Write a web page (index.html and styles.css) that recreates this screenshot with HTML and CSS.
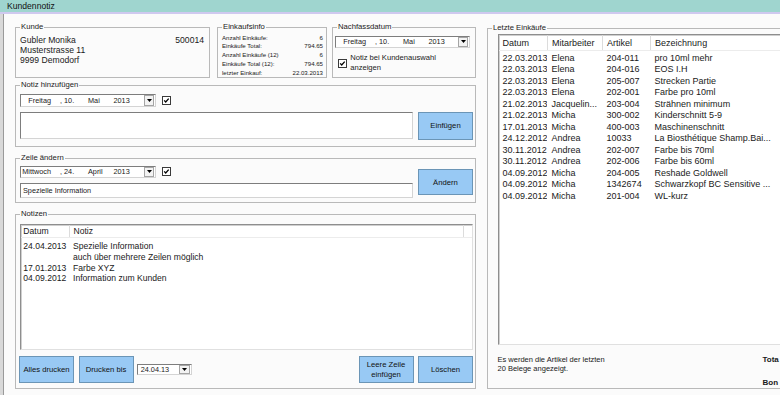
FILE: index.html
```html
<!DOCTYPE html>
<html lang="de">
<head>
  <meta charset="UTF-8">
  <meta name="viewport" content="width=device-width, initial-scale=1.0">
  <title>Kundennotiz</title>
  <link rel="stylesheet" href="styles.css">
</head>
<body>
  <div class="window">
    <div class="titlebar">Kundennotiz</div>
    <div class="client">
      <div class="left">
        <div class="toprow">
          <!-- Kunde -->
          <fieldset class="group kunde">
            <legend>Kunde</legend>
            <div class="spread"><span>Gubler Monika</span><span>500014</span></div>
            <div>Musterstrasse 11</div>
            <div>9999 Demodorf</div>
          </fieldset>

          <!-- Einkaufsinfo -->
          <fieldset class="group info">
            <legend>Einkaufsinfo</legend>
            <div class="spread"><span>Anzahl Einkäufe:</span><span>6</span></div>
            <div class="spread"><span>Einkäufe Total:</span><span>794.65</span></div>
            <div class="spread"><span>Anzahl Einkäufe (12)</span><span>6</span></div>
            <div class="spread"><span>Einkäufe Total (12):</span><span>794.65</span></div>
            <div class="spread"><span>letzter Einkauf:</span><span>22.03.2013</span></div>
          </fieldset>

          <!-- Nachfassdatum -->
          <fieldset class="group nachfass">
            <legend>Nachfassdatum</legend>
            <div class="datepick wide">
              <span class="dp-day">Freitag</span><span class="dp-num">, 10.</span><span class="dp-month">Mai</span><span class="dp-year">2013</span>
              <span class="dp-btn"><svg width="5" height="3" viewBox="0 0 5 3"><path d="M0 0h5L2.5 3z" fill="#000"/></svg></span>
            </div>
            <div class="check-label">
              <span class="check"><svg width="7" height="7" viewBox="0 0 7 7"><path d="M1.2 3.4l1.5 1.6 3-3.4" fill="none" stroke="#000" stroke-width="1.3"/></svg></span>
              <span>Notiz bei Kundenauswahl<br>anzeigen</span>
            </div>
          </fieldset>
        </div>

        <!-- Notiz hinzufügen -->
        <fieldset class="group neu">
          <legend>Notiz hinzufügen</legend>
          <div class="row">
            <div class="datepick">
              <span class="dp-day">Freitag</span><span class="dp-num">, 10.</span><span class="dp-month">Mai</span><span class="dp-year">2013</span>
              <span class="dp-btn"><svg width="5" height="3" viewBox="0 0 5 3"><path d="M0 0h5L2.5 3z" fill="#000"/></svg></span>
            </div>
            <span class="check"><svg width="7" height="7" viewBox="0 0 7 7"><path d="M1.2 3.4l1.5 1.6 3-3.4" fill="none" stroke="#000" stroke-width="1.3"/></svg></span>
          </div>
          <div class="row neu-text">
            <div class="textbox memo"></div>
            <div class="btn big">Einfügen</div>
          </div>
        </fieldset>

        <!-- Zeile ändern -->
        <fieldset class="group zeile">
          <legend>Zeile ändern</legend>
          <div class="row top">
            <div class="zeile-fields">
              <div class="row">
                <div class="datepick">
                  <span class="dp-day">Mittwoch</span><span class="dp-num">, 24.</span><span class="dp-month">April</span><span class="dp-year">2013</span>
                  <span class="dp-btn"><svg width="5" height="3" viewBox="0 0 5 3"><path d="M0 0h5L2.5 3z" fill="#000"/></svg></span>
                </div>
                <span class="check"><svg width="7" height="7" viewBox="0 0 7 7"><path d="M1.2 3.4l1.5 1.6 3-3.4" fill="none" stroke="#000" stroke-width="1.3"/></svg></span>
              </div>
              <div class="textbox line">Spezielle Information</div>
            </div>
            <div class="btn aendern">Ändern</div>
          </div>
        </fieldset>

        <!-- Notizen -->
        <fieldset class="group notizen">
          <legend>Notizen</legend>
          <div class="list notes">
            <table>
              <colgroup><col class="n-datum"><col class="n-notiz"><col class="n-rest"></colgroup>
              <thead><tr><th>Datum</th><th>Notiz</th><th></th></tr></thead>
              <tbody>
                <tr class="first"><td>24.04.2013</td><td>Spezielle Information</td><td></td></tr>
                <tr><td></td><td>auch über mehrere Zeilen möglich</td><td></td></tr>
                <tr><td>17.01.2013</td><td>Farbe XYZ</td><td></td></tr>
                <tr><td>04.09.2012</td><td>Information zum Kunden</td><td></td></tr>
              </tbody>
            </table>
          </div>
          <div class="row buttons">
            <div class="btn big first-btn">Alles drucken</div>
            <div class="btn big">Drucken bis</div>
            <div class="combo">
              <span>24.04.13</span>
              <span class="dp-btn"><svg width="5" height="3" viewBox="0 0 5 3"><path d="M0 0h5L2.5 3z" fill="#000"/></svg></span>
            </div>
            <div class="btn big push">Leere Zeile<br>einfügen</div>
            <div class="btn big">Löschen</div>
          </div>
        </fieldset>
      </div>

      <div class="right">
        <fieldset class="group einkaeufe">
          <legend>Letzte Einkäufe</legend>
          <div class="list sales">
            <table>
              <colgroup><col class="s-datum"><col class="s-mitarb"><col class="s-artikel"><col class="s-bez"></colgroup>
              <thead><tr><th>Datum</th><th>Mitarbeiter</th><th>Artikel</th><th>Bezeichnung</th></tr></thead>
              <tbody>
                <tr class="first"><td>22.03.2013</td><td>Elena</td><td>204-011</td><td>pro 10ml mehr</td></tr>
                <tr><td>22.03.2013</td><td>Elena</td><td>204-016</td><td>EOS I.H</td></tr>
                <tr><td>22.03.2013</td><td>Elena</td><td>205-007</td><td>Strecken Partie</td></tr>
                <tr><td>22.03.2013</td><td>Elena</td><td>202-001</td><td>Farbe pro 10ml</td></tr>
                <tr><td>21.02.2013</td><td>Jacquelin...</td><td>203-004</td><td>Strähnen minimum</td></tr>
                <tr><td>21.02.2013</td><td>Micha</td><td>300-002</td><td>Kinderschnitt 5-9</td></tr>
                <tr><td>17.01.2013</td><td>Micha</td><td>400-003</td><td>Maschinenschnitt</td></tr>
                <tr><td>24.12.2012</td><td>Andrea</td><td>10033</td><td>La Biosthétique Shamp.Bai...</td></tr>
                <tr><td>30.11.2012</td><td>Andrea</td><td>202-007</td><td>Farbe bis 70ml</td></tr>
                <tr><td>30.11.2012</td><td>Andrea</td><td>202-006</td><td>Farbe bis 60ml</td></tr>
                <tr><td>04.09.2012</td><td>Micha</td><td>204-005</td><td>Reshade Goldwell</td></tr>
                <tr><td>04.09.2012</td><td>Micha</td><td>1342674</td><td>Schwarzkopf BC Sensitive ...</td></tr>
                <tr><td>04.09.2012</td><td>Micha</td><td>201-004</td><td>WL-kurz</td></tr>
              </tbody>
            </table>
          </div>
          <div class="sales-foot">
            <div class="foot-note">Es werden die Artikel der letzten<br>20 Belege angezeigt.</div>
            <div class="totals">
              <div>Tota</div>
              <div class="bonus">Bon</div>
            </div>
          </div>
        </fieldset>
      </div>
    </div>
  </div>
</body>
</html>
```

FILE: styles.css
```css
/* General Reset */
body {
  margin: 0;
  font-family: "Liberation Sans", Arial, sans-serif;
  color: #1a1a1a;
  background: #fff;
}
.window {
  width: 780px;
  height: 395px;
  overflow: hidden;
  background: linear-gradient(to right, #d9d9d9 3px, #fbfbfb 3px);
}
.titlebar {
  height: 12px;
  line-height: 12px;
  padding-left: 7px;
  font-size: 8.6px;
  color: #111;
  background: #9fd5cf;
  border-bottom: 2px solid #cfc9ef;
}
.client {
  display: flex;
  height: 381px;
  margin-left: 3px;
  padding-left: 11px;
  border-left: 1px solid #9a9a9a;
}
.left {
  width: 461px;
  flex: none;
  display: flex;
  flex-direction: column;
  padding-top: 8px;
}
.right {
  width: 320px;
  flex: none;
  margin-left: 11px;
  padding-top: 9px;
}

/* Group boxes */
.group {
  margin: 0;
  padding: 0 2px 0 4px;
  border: 1px solid #b9b9b9;
  box-sizing: border-box;
  min-width: 0;
}
.group legend {
  padding: 0 1px;
  font-size: 7.7px;
  line-height: 10px;
}
.spread {
  display: flex;
  justify-content: space-between;
}
.row {
  display: flex;
  align-items: center;
}
.row.top {
  align-items: flex-start;
}
.toprow {
  display: flex;
  height: 56px;
}
.kunde {
  width: 195px;
  padding: 3px 5px 0 4px;
  font-size: 8.6px;
  line-height: 10px;
}
.info {
  width: 110px;
  margin-left: 7px;
  padding: 1.5px 3px 0 4px;
  font-size: 6.1px;
  line-height: 8.9px;
}
.nachfass {
  width: 144px;
  margin-left: 5px;
  padding: 3.7px 2px 0 2px;
}
.nachfass legend {
  margin-left: 2px;
}
.check-label {
  display: flex;
  align-items: center;
  margin-top: 5px;
  font-size: 7.6px;
  line-height: 10px;
  color: #1a1a1a;
}
.check-label .check {
  margin: 0 3.5px 0 2.7px;
}
.neu {
  height: 67px;
  margin-top: 2px;
  padding-top: 4px;
}
.neu-text {
  margin-top: 5.7px;
  align-items: flex-start;
}
.zeile {
  height: 50px;
  margin-top: 6px;
}
.zeile-fields {
  width: 393px;
  padding-top: 2.7px;
}
.notizen {
  height: 180px;
  margin-top: 6px;
  padding-top: 4.7px;
}
.einkaeufe {
  height: 366px;
}

/* Controls */
.datepick {
  display: flex;
  align-items: center;
  width: 136px;
  height: 12.6px;
  box-sizing: border-box;
  border: 1px solid;
  border-color: #7d7d7d #d4d4d4 #d4d4d4 #7d7d7d;
  background: #fff;
  font-size: 7.3px;
  white-space: nowrap;
}
.datepick.wide {
  width: 135px;
}
.dp-day {
  width: 30px;
  text-align: right;
}
.dp-num {
  width: 28px;
  margin-left: 9px;
}
.dp-month {
  width: 25.5px;
}
.dp-btn {
  display: flex;
  align-items: center;
  justify-content: center;
  width: 8px;
  height: 8.6px;
  margin: 0 1px 0 auto;
  border: 1px solid #a5a5a5;
  background: #f3f3f3;
}
.check {
  display: flex;
  align-items: center;
  justify-content: center;
  width: 7px;
  height: 7px;
  border: 1px solid #3a3a3a;
  background: #fff;
  flex: none;
}
.row > .check {
  margin-left: 6px;
}
.textbox {
  box-sizing: border-box;
  border: 1px solid;
  border-color: #7d7d7d #d4d4d4 #d4d4d4 #7d7d7d;
  background: #fff;
}
.memo {
  width: 393px;
  height: 27px;
}
.line {
  width: 393px;
  height: 15px;
  margin-top: 4.4px;
  padding-left: 2px;
  font-size: 7.3px;
  line-height: 13px;
}
.btn {
  display: flex;
  align-items: center;
  justify-content: center;
  width: 55px;
  box-sizing: border-box;
  background: #98c9f4;
  border: 1px solid #6b95b6;
  font-size: 7.7px;
  line-height: 9.5px;
  text-align: center;
  color: #111;
  flex: none;
}
.big {
  height: 27.5px;
}
.neu-text .btn {
  margin-left: 5px;
}
.aendern {
  height: 26px;
  margin: 6.3px 0 0 5px;
}
.buttons {
  margin-top: 6px;
}
.buttons .btn + .btn {
  margin-left: 4.5px;
}
.first-btn {
  margin-left: -1px;
}
.push {
  margin-left: auto;
}
.combo {
  display: flex;
  align-items: center;
  width: 55px;
  height: 11px;
  margin-left: 3.7px;
  box-sizing: border-box;
  border: 1px solid;
  border-color: #7d7d7d #d4d4d4 #d4d4d4 #7d7d7d;
  background: #fff;
  font-size: 7.3px;
  padding-left: 2.5px;
}
.combo .dp-btn {
  width: 9px;
  height: 7.5px;
}

/* List views */
.list {
  box-sizing: border-box;
  background: #fff;
  border: 1px solid;
  border-color: #8e8e8e #e0e0e0 #e0e0e0 #8e8e8e;
  box-shadow: inset 1px 1px 0 #cfcfcf;
  overflow: hidden;
}
.list table {
  border-collapse: collapse;
  table-layout: fixed;
}
.list th {
  text-align: left;
  font-weight: normal;
  padding: 0 0 0 4px;
  border-right: 1px solid #dcdcdc;
  border-bottom: 1px solid #ececec;
  white-space: nowrap;
}
.list td {
  padding: 0 0 0 4px;
  white-space: nowrap;
  overflow: hidden;
}
.notes {
  width: 453px;
  height: 126.3px;
}
.notes table {
  width: 451px;
  font-size: 8.6px;
}
.notes th {
  height: 12px;
}
.notes td {
  height: 10.7px;
  line-height: 10.7px;
}
.notes tr.first td {
  padding-top: 3.5px;
}
.notes th:first-child,
.notes td:first-child {
  padding-left: 2.3px;
}
.n-datum { width: 48px; }
.n-notiz { width: 394px; }
.n-rest { width: 9px; }

.sales {
  width: 300px;
  height: 311px;
  margin: 1px 0 0 6px;
}
.sales table {
  width: 300px;
  font-size: 9px;
}
.sales th {
  height: 15px;
  padding-left: 4.6px;
}
.sales td {
  height: 11.5px;
  line-height: 11.5px;
  padding-left: 4.6px;
}
.sales tr.first td {
  padding-top: 1.5px;
}
.sales th:first-child,
.sales td:first-child {
  padding-left: 3.5px;
}
.s-datum { width: 48px; }
.s-mitarb { width: 55px; }
.s-artikel { width: 48px; }
.s-bez { width: 149px; }

.sales-foot {
  display: flex;
  margin: 10px 0 0 5.5px;
}
.foot-note {
  width: 265px;
  flex: none;
  font-size: 7.5px;
  line-height: 9px;
}
.totals {
  font-weight: bold;
  font-size: 8px;
  line-height: 9px;
}
.bonus {
  margin-top: 13.5px;
}
```
